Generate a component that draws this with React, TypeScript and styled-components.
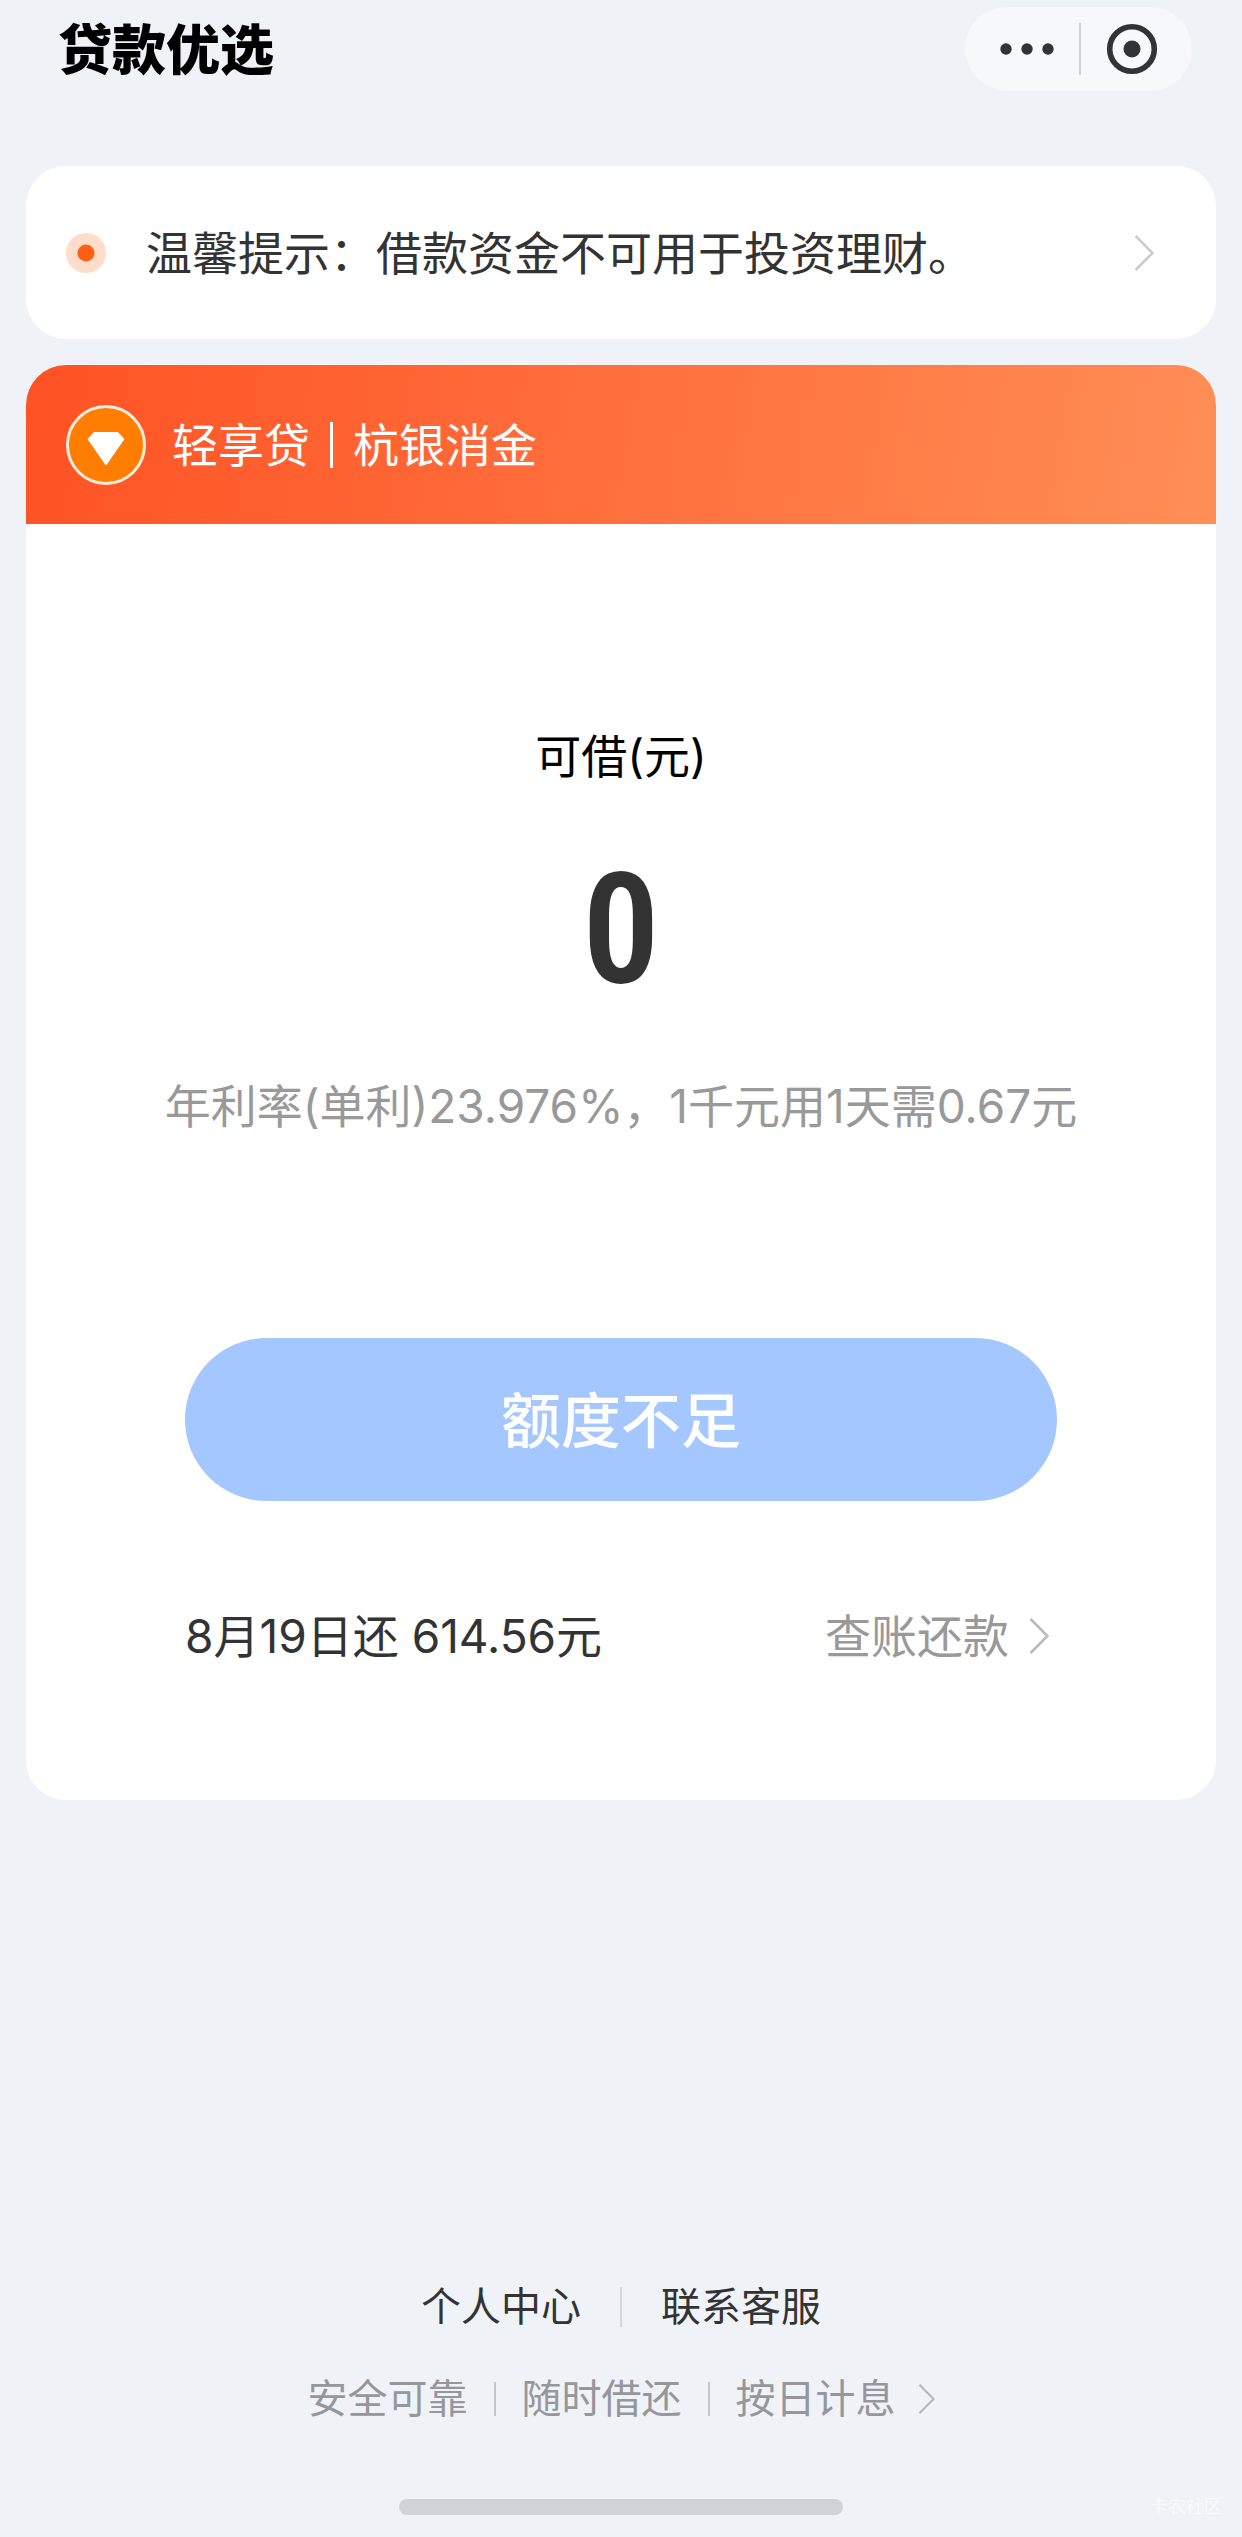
import React from "react";
import styled, { createGlobalStyle } from "styled-components";

const GlobalStyle = createGlobalStyle`
  *, *::before, *::after { box-sizing: border-box; }
  body {
    margin: 0;
    background: #eff3f8;
    color: #333333;
    font-family: Inter, "Noto Sans CJK SC", sans-serif;
    font-size: 46px;
    line-height: 66px;
  }
  a { color: inherit; text-decoration: none; }
  button { font-family: inherit; border: 0; padding: 0; }
  h1, p { margin: 0; }
`;

const Page = styled.div`
  display: flex;
  flex-direction: column;
  min-height: 100vh;
`;

const TopBar = styled.header`
  display: flex;
  align-items: center;
  justify-content: space-between;
  height: 98px;
  padding: 0 50px 0 58px;
`;

const Title = styled.h1`
  padding-bottom: 4px;
  font-family: "Noto Sans CJK SC", sans-serif;
  font-size: 54px;
  font-weight: 900;
  line-height: 80px;
  color: #000000;
`;

const Capsule = styled.div`
  display: flex;
  align-items: center;
  width: 227px;
  height: 84px;
  padding: 0 9px 0 11px;
  border-radius: 42px;
  background: #f7f8fa;
`;

const CapsuleButton = styled.button`
  display: flex;
  flex: 1;
  align-items: center;
  justify-content: center;
  height: 100%;
  background: transparent;
  color: #333333;
`;

const Rule = styled.span<{ $size: number; $tone: string; $thick?: number }>`
  flex: none;
  width: ${(p) => p.$thick ?? 2}px;
  height: ${(p) => p.$size}px;
  background: ${(p) => p.$tone};
`;

const Main = styled.main`
  display: flex;
  flex-direction: column;
  gap: 26px;
  padding: 68px 26px 60px;
`;

const Notice = styled.a`
  display: flex;
  align-items: center;
  gap: 40px;
  min-height: 173px;
  padding: 0 62px 0 40px;
  border-radius: 40px;
  background: #ffffff;
`;

const NoticeText = styled.span`
  flex: 1;
`;

const Card = styled.section`
  overflow: hidden;
  border-radius: 40px;
  background: #ffffff;
`;

const CardHeader = styled.div`
  display: flex;
  align-items: center;
  gap: 26px;
  padding: 40px 40px 39px;
  background: linear-gradient(100deg, #ff5224 0%, #ff8e56 100%);
  color: #ffffff;
`;

const Brand = styled.div`
  display: flex;
  align-items: center;
  gap: 20px;
`;

const CardBody = styled.div`
  display: flex;
  flex-direction: column;
  align-items: center;
  padding: 199px 40px 131px;
  text-align: center;
`;

const Label = styled.p`
  color: #000000;
`;

const Amount = styled.p`
  margin: 82px 0 82px;
  font-family: "DIN Alternate", "Roboto Condensed", Roboto, sans-serif;
  font-size: 154px;
  font-weight: 600;
  line-height: 120px;
`;

const Rate = styled.p`
  color: #999999;
`;

const Actions = styled.div`
  display: flex;
  flex-direction: column;
  gap: 102px;
  align-self: stretch;
  margin: 199px 119px 0;
`;

const PrimaryButton = styled.button`
  height: 163px;
  padding-bottom: 6px;
  border-radius: 82px;
  background: #a4c7ff;
  color: #ffffff;
  font-size: 60px;
  font-weight: 500;
`;

const RepayRow = styled.div`
  display: flex;
  align-items: center;
  justify-content: space-between;
`;

const RepayLink = styled.a`
  display: flex;
  align-items: center;
  gap: 20px;
  padding-right: 8px;
  color: #999999;
`;

const Footer = styled.footer`
  display: flex;
  flex-direction: column;
  align-items: center;
  gap: 44px;
  margin-top: auto;
  padding-bottom: 76px;
  font-size: 40px;
  line-height: 48px;
`;

const FooterRow = styled.div<{ $gap: number; $tone: string }>`
  display: flex;
  align-items: center;
  gap: ${(p) => p.$gap}px;
  color: ${(p) => p.$tone};
`;

const TermsLink = styled.a`
  display: flex;
  align-items: center;
  gap: 22px;
`;

const BottomEdge = styled.div`
  display: grid;
  grid-template-columns: 1fr 444px 1fr;
  align-items: center;
  height: 16px;
  margin-bottom: 22px;
`;

const HomeBar = styled.div`
  grid-column: 2;
  height: 16px;
  border-radius: 8px;
  background: #d1d2d7;
`;

const Watermark = styled.span`
  justify-self: end;
  padding-right: 20px;
  color: #f8fafc;
  font-size: 18px;
  line-height: 16px;
`;

function Chevron({ width, height, tone }: { width: number; height: number; tone: string }) {
  return (
    <svg width={width} height={height} viewBox="0 0 20 36" fill="none" aria-hidden="true">
      <path d="M1.5 1 L18.5 18 L1.5 35" stroke={tone} strokeWidth="2.6" />
    </svg>
  );
}

function DotsIcon() {
  return (
    <svg width="54" height="12" viewBox="0 0 54 12" fill="currentColor" aria-hidden="true">
      <circle cx="6" cy="6" r="5.7" />
      <circle cx="27" cy="6" r="5.7" />
      <circle cx="48" cy="6" r="5.7" />
    </svg>
  );
}

function TargetIcon() {
  return (
    <svg width="52" height="52" viewBox="0 0 52 52" aria-hidden="true">
      <circle cx="26" cy="26" r="22.3" fill="none" stroke="currentColor" strokeWidth="5.6" />
      <circle cx="26" cy="26" r="8.5" fill="currentColor" />
    </svg>
  );
}

function PulseIcon() {
  return (
    <svg width="40" height="40" viewBox="0 0 40 40" aria-hidden="true">
      <circle cx="20" cy="20" r="20" fill="#ffdccb" />
      <circle cx="20" cy="20" r="8.5" fill="#ff6114" />
    </svg>
  );
}

function DiamondIcon() {
  return (
    <svg width="80" height="80" viewBox="0 0 80 80" aria-hidden="true">
      <circle cx="40" cy="40" r="38.5" fill="#ff7d00" stroke="#ffeedd" strokeWidth="3" />
      <path
        d="M28 27.5 H52 L58 34 L40 60 L22 34 Z"
        fill="#ffffff"
        stroke="#ffffff"
        strokeWidth="1"
        strokeLinejoin="round"
      />
    </svg>
  );
}

export default function App() {
  return (
    <>
      <GlobalStyle />
      <Page lang="zh-CN">
        <TopBar>
          <Title>贷款优选</Title>
          <Capsule>
            <CapsuleButton type="button" aria-label="更多">
              <DotsIcon />
            </CapsuleButton>
            <Rule $size={52} $tone="#d0d1d3" />
            <CapsuleButton type="button" aria-label="关闭">
              <TargetIcon />
            </CapsuleButton>
          </Capsule>
        </TopBar>

        <Main>
          <Notice href="#notice">
            <PulseIcon />
            <NoticeText>温馨提示：借款资金不可用于投资理财。</NoticeText>
            <Chevron width={20} height={36} tone="#cccccc" />
          </Notice>

          <Card>
            <CardHeader>
              <DiamondIcon />
              <Brand>
                <span>轻享贷</span>
                <Rule $size={46} $tone="#ffffff" $thick={3} />
                <span>杭银消金</span>
              </Brand>
            </CardHeader>
            <CardBody>
              <Label>可借(元)</Label>
              <Amount>0</Amount>
              <Rate>年利率(单利)23.976%，1千元用1天需0.67元</Rate>
              <Actions>
                <PrimaryButton type="button">额度不足</PrimaryButton>
                <RepayRow>
                  <span>8月19日还 614.56元</span>
                  <RepayLink href="#repay">
                    查账还款
                    <Chevron width={20} height={36} tone="#bbbbbb" />
                  </RepayLink>
                </RepayRow>
              </Actions>
            </CardBody>
          </Card>
        </Main>

        <Footer>
          <FooterRow $gap={39} $tone="#333333">
            <a href="#profile">个人中心</a>
            <Rule $size={40} $tone="#d3d6db" />
            <a href="#service">联系客服</a>
          </FooterRow>
          <FooterRow $gap={26} $tone="#95979b">
            <span>安全可靠</span>
            <Rule $size={34} $tone="#c3c6ca" />
            <span>随时借还</span>
            <Rule $size={34} $tone="#c3c6ca" />
            <TermsLink href="#terms">
              按日计息
              <Chevron width={17} height={30} tone="#b4b7bb" />
            </TermsLink>
          </FooterRow>
        </Footer>

        <BottomEdge>
          <HomeBar />
          <Watermark>卡农社区</Watermark>
        </BottomEdge>
      </Page>
    </>
  );
}
